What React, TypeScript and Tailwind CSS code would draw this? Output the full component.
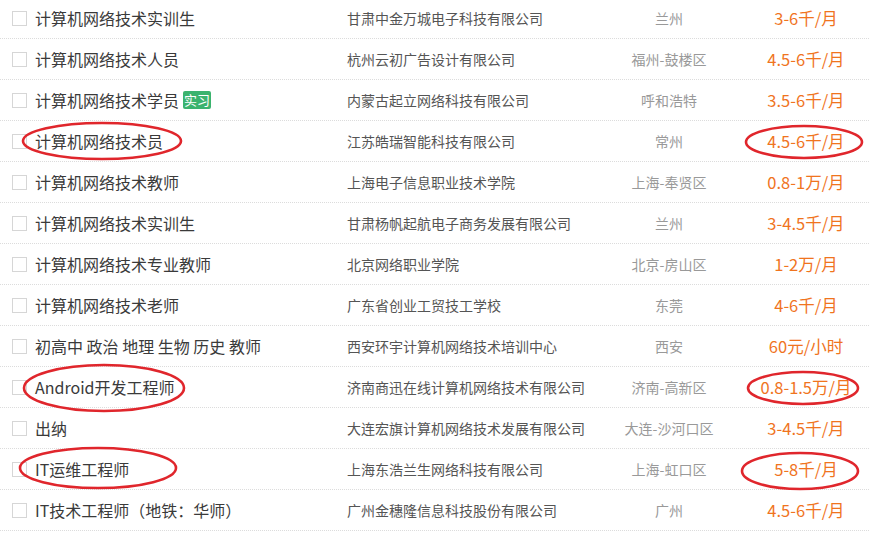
const jobs = [
  { title: '计算机网络技术实训生', company: '甘肃中金万城电子科技有限公司', city: '兰州', salary: '3-6千/月' },
  { title: '计算机网络技术人员', company: '杭州云初广告设计有限公司', city: '福州-鼓楼区', salary: '4.5-6千/月' },
  { title: '计算机网络技术学员', company: '内蒙古起立网络科技有限公司', city: '呼和浩特', salary: '3.5-6千/月', tag: '实习' },
  { title: '计算机网络技术员', company: '江苏皓瑞智能科技有限公司', city: '常州', salary: '4.5-6千/月' },
  { title: '计算机网络技术教师', company: '上海电子信息职业技术学院', city: '上海-奉贤区', salary: '0.8-1万/月' },
  { title: '计算机网络技术实训生', company: '甘肃杨帆起航电子商务发展有限公司', city: '兰州', salary: '3-4.5千/月' },
  { title: '计算机网络技术专业教师', company: '北京网络职业学院', city: '北京-房山区', salary: '1-2万/月' },
  { title: '计算机网络技术老师', company: '广东省创业工贸技工学校', city: '东莞', salary: '4-6千/月' },
  { title: '初高中 政治 地理 生物 历史 教师', company: '西安环宇计算机网络技术培训中心', city: '西安', salary: '60元/小时' },
  { title: 'Android开发工程师', company: '济南商迅在线计算机网络技术有限公司', city: '济南-高新区', salary: '0.8-1.5万/月' },
  { title: '出纳', company: '大连宏旗计算机网络技术发展有限公司', city: '大连-沙河口区', salary: '3-4.5千/月' },
  { title: 'IT运维工程师', company: '上海东浩兰生网络科技有限公司', city: '上海-虹口区', salary: '5-8千/月' },
  { title: 'IT技术工程师（地铁：华师）', company: '广州金穗隆信息科技股份有限公司', city: '广州', salary: '4.5-6千/月' },
]

// hand-drawn red circles over the screenshot
const marks = [
  { cx: 102, cy: 141, rx: 79, ry: 18 },
  { cx: 804, cy: 142, rx: 58, ry: 16 },
  { cx: 104, cy: 388, rx: 80, ry: 23 },
  { cx: 803, cy: 388, rx: 55, ry: 16 },
  { cx: 98, cy: 468, rx: 78, ry: 20 },
  { cx: 800, cy: 471, rx: 58, ry: 18 },
]

export default function App() {
  return (
    <div
      className="relative w-[869px] h-[534px] overflow-hidden bg-white"
      style={{ fontFamily: '"Microsoft YaHei", "Noto Sans CJK SC", sans-serif' }}
    >
      <div className="-mt-[2px]">
        {jobs.map((job, i) => (
          <div key={i} className="flex h-[41px] items-center border-b border-dotted border-[#dcdcdc]">
            <div className="ml-[12px] h-[15px] w-[15px] shrink-0 border border-[#d6d6d6] bg-white" />
            <div className="ml-[8px] flex w-[312px] items-center text-[16px] text-[#3a3a3a]">
              <span className="whitespace-nowrap">{job.title}</span>
              {job.tag && (
                <span className="ml-[4px] rounded-[2px] bg-[#3bb36e] px-[1px] text-[13px] leading-[18px] text-white">
                  {job.tag}
                </span>
              )}
            </div>
            <div className="w-[262px] whitespace-nowrap text-[14px] text-[#555]">{job.company}</div>
            <div className="w-[120px] text-center text-[14px] whitespace-nowrap text-[#999]">{job.city}</div>
            <div className="ml-[15px] w-[124px] text-center text-[16.5px] whitespace-nowrap text-[#f0741e]">
              {job.salary}
            </div>
          </div>
        ))}
      </div>
      <svg className="pointer-events-none absolute left-0 top-0" width="869" height="534">
        {marks.map((m, i) => (
          <ellipse key={i} cx={m.cx} cy={m.cy} rx={m.rx} ry={m.ry} fill="none" stroke="#e0262c" strokeWidth="2.6" />
        ))}
      </svg>
    </div>
  )
}
